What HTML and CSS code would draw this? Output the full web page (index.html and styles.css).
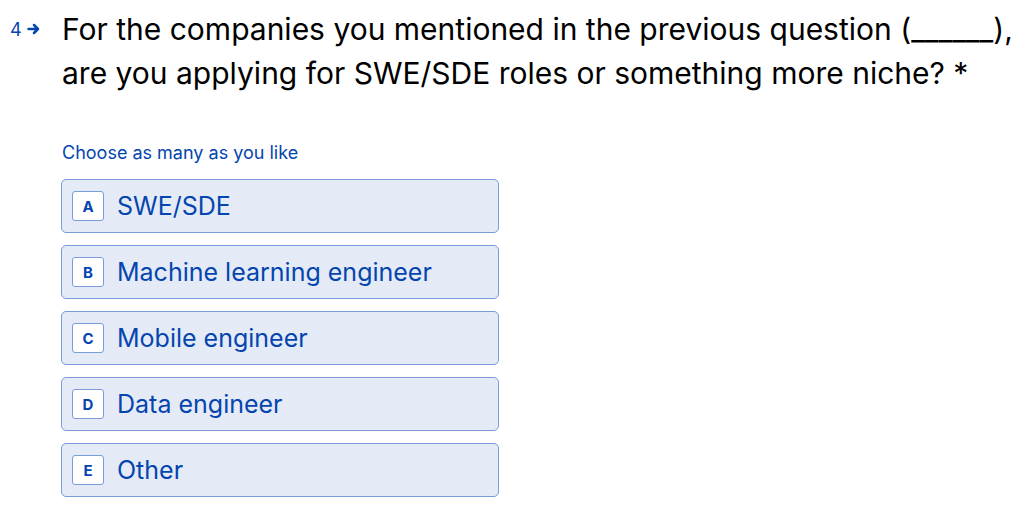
FILE: index.html
```html
<!DOCTYPE html>
<html>
<head>
<meta charset="utf-8">
<link rel="stylesheet" href="styles.css">
</head>
<body>
<div class="question">
  <div class="qnum"><span class="num">4</span><svg class="arrow" width="14" height="12" viewBox="0 0 14 12"><path d="M1.5 6h9.5M7 2l4 4-4 4" fill="none" stroke="#0445af" stroke-width="2.5" stroke-linecap="round" stroke-linejoin="round"/></svg></div>
  <div class="content">
    <h1 class="title">For the companies you mentioned in the previous question (______), are you applying for SWE/SDE roles or something more niche? *</h1>
    <div class="hint">Choose as many as you like</div>
    <div class="choices">
      <div class="choice"><span class="key">A</span><span class="label">SWE/SDE</span></div>
      <div class="choice"><span class="key">B</span><span class="label">Machine learning engineer</span></div>
      <div class="choice"><span class="key">C</span><span class="label">Mobile engineer</span></div>
      <div class="choice"><span class="key">D</span><span class="label">Data engineer</span></div>
      <div class="choice"><span class="key">E</span><span class="label">Other</span></div>
    </div>
  </div>
</div>
</body>
</html>
```
FILE: styles.css
```css
html, body {
  margin: 0;
  padding: 0;
  background: #ffffff;
}
body {
  font-family: Inter, "Liberation Sans", sans-serif;
  width: 1024px;
  height: 515px;
  overflow: hidden;
}
.question {
  display: flex;
  padding: 7px 0 0 10px;
}
.qnum {
  width: 52px;
  flex: none;
  display: flex;
  align-items: center;
  height: 44px;
  color: #0445af;
  font-size: 18px;
}
.num {
  margin-right: 5px;
}
.arrow {
  display: block;
}
.content {
  width: 960px;
}
.title {
  margin: 0;
  font-weight: 400;
  font-size: 30px;
  line-height: 44px;
  color: #000000;
}
.hint {
  margin-top: 46px;
  font-size: 18px;
  line-height: 24px;
  color: #0445af;
}
.choices {
  margin-top: 14px;
  display: flex;
  flex-direction: column;
  gap: 12px;
  width: 438px;
  margin-left: -1px;
}
.choice {
  box-sizing: border-box;
  height: 54px;
  display: flex;
  align-items: center;
  background: #e5ebf6;
  border: 1px solid #7a9cd8;
  border-radius: 5px;
  padding-left: 10px;
}
.key {
  box-sizing: border-box;
  width: 32px;
  height: 30px;
  display: flex;
  align-items: center;
  justify-content: center;
  background: #ffffff;
  border: 1px solid #7a9cd8;
  border-radius: 3px;
  color: #0445af;
  font-size: 15px;
  font-weight: 700;
}
.label {
  margin-left: 13px;
  font-size: 25px;
  color: #0445af;
}
```
